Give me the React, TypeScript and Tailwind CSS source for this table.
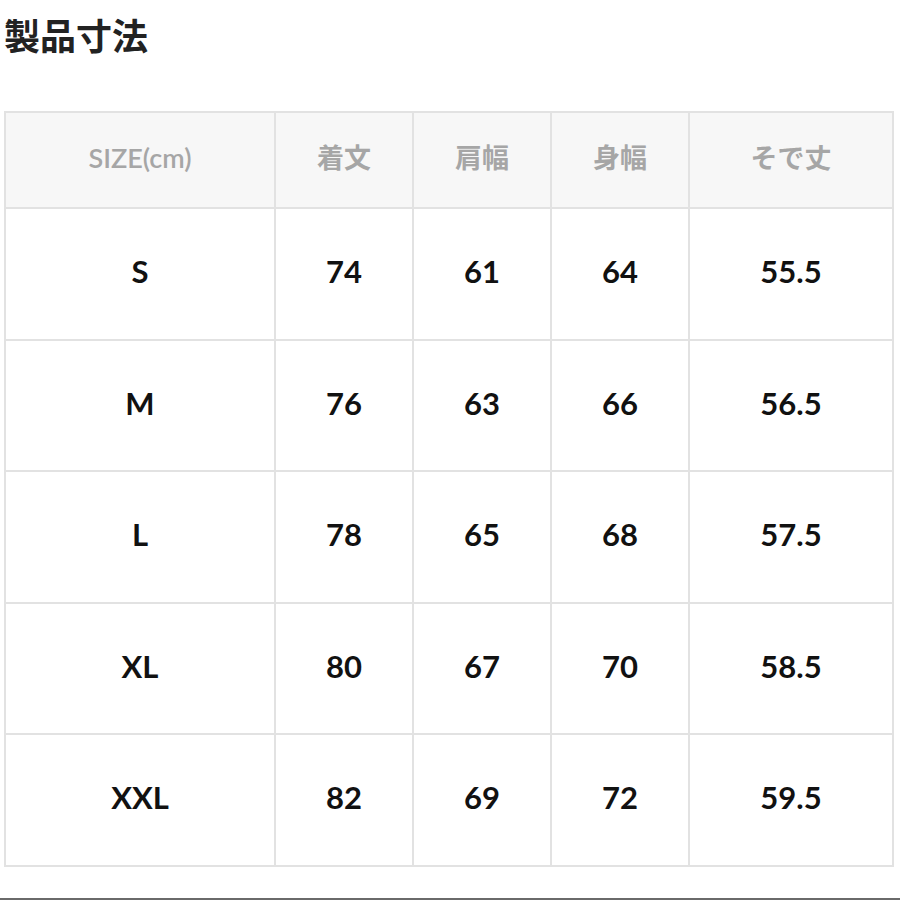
import React from "react";

const headers = ["SIZE(cm)", "着文", "肩幅", "身幅", "そで丈"];
const rows = [
  ["S", "74", "61", "64", "55.5"],
  ["M", "76", "63", "66", "56.5"],
  ["L", "78", "65", "68", "57.5"],
  ["XL", "80", "67", "70", "58.5"],
  ["XXL", "82", "69", "72", "59.5"],
];

export default function App() {
  return (
    <div className="w-[900px] h-[900px] bg-white flex flex-col overflow-hidden">
      <h1
        className="ml-[4px] mt-[12px] text-[36px] leading-[44px] font-bold text-[#222]"
        style={{ fontFamily: '"Noto Sans CJK JP", sans-serif' }}
      >
        製品寸法
      </h1>
      <div
        className="ml-[4px] mt-[55px] w-[890px] grid grid-cols-[270px_138px_138px_138px_204px] border-l-2 border-t-2 border-[#e2e2e2]"
        style={{ fontFamily: 'Lato, "Noto Sans CJK JP", sans-serif' }}
      >
        {headers.map((h) => (
          <div
            key={h}
            className="h-[96px] pb-[3px] flex items-center justify-center bg-[#f7f7f7] border-r-2 border-b-2 border-[#e2e2e2] text-[27px] font-semibold text-[#a6a6a6]"
          >
            {h}
          </div>
        ))}
        {rows.map((r) =>
          r.map((c, i) => (
            <div
              key={r[0] + i}
              className="h-[131.5px] pb-[5px] flex items-center justify-center bg-white border-r-2 border-b-2 border-[#e2e2e2] text-[31px] font-bold text-[#111]"
            >
              {c}
            </div>
          ))
        )}
      </div>
      <div className="mt-auto h-[2px] w-full bg-[#6a6a6a]" />
    </div>
  );
}
